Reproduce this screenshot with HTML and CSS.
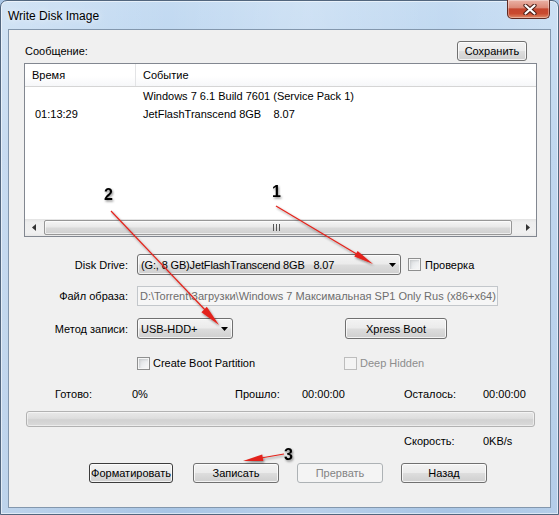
FILE: index.html
```html
<!DOCTYPE html>
<html lang="ru">
<head>
<meta charset="utf-8">
<title>Write Disk Image</title>
<link rel="stylesheet" href="styles.css">
</head>
<body>
<div class="window">
  <div class="titlebar">
    <span class="title">Write Disk Image</span>
    <div class="close">
      <svg width="14" height="11" viewBox="0 0 14 11"><path d="M2.5 1.5 L11.5 9.5 M11.5 1.5 L2.5 9.5" stroke="#4a1d16" stroke-width="4.2" stroke-linecap="round"/><path d="M2.5 1.5 L11.5 9.5 M11.5 1.5 L2.5 9.5" stroke="#fff" stroke-width="2.2" stroke-linecap="round"/></svg>
    </div>
  </div>
  <div class="client">
    <div class="msg-row">
      <span>Сообщение:</span>
      <button class="btn save">Сохранить</button>
    </div>
    <div class="list">
      <div class="list-head">
        <div class="head-time">Время</div>
        <div class="head-event">Событие</div>
      </div>
      <div class="list-body">
        <div class="row"><div class="cell-time"></div><div class="cell-event">Windows 7 6.1 Build 7601 (Service Pack 1)</div></div>
        <div class="row"><div class="cell-time">01:13:29</div><div class="cell-event">JetFlashTranscend 8GB&nbsp;&nbsp;&nbsp;&nbsp;8.07</div></div>
      </div>
      <div class="hscroll">
        <div class="sb-arrow"><svg width="4" height="7" viewBox="0 0 4 7"><polygon points="4,0 4,7 0,3.5" fill="#333"/></svg></div>
        <div class="sb-thumb"><svg width="7" height="7" viewBox="0 0 7 7"><path d="M0.5 0V7M3.5 0V7M6.5 0V7" stroke="#555" stroke-width="1"/></svg></div>
        <div class="sb-arrow"><svg width="4" height="7" viewBox="0 0 4 7"><polygon points="0,0 0,7 4,3.5" fill="#333"/></svg></div>
      </div>
    </div>

    <div class="field-row r-drive">
      <span class="flabel">Disk Drive:</span>
      <div class="combo combo-drive"><span class="combo-text">(G:, 8 GB)JetFlashTranscend 8GB&nbsp;&nbsp; 8.07</span><svg class="combo-arrow" width="7" height="4" viewBox="0 0 7 4"><polygon points="0,0 7,0 3.5,4" fill="#000"/></svg></div>
      <div class="check check-verify"><span class="cb"></span><span>Проверка</span></div>
    </div>

    <div class="field-row r-file">
      <span class="flabel">Файл образа:</span>
      <div class="textbox">D:\Torrent\Загрузки\Windows 7 Максимальная SP1 Only Rus (x86+x64)</div>
    </div>

    <div class="field-row r-method">
      <span class="flabel">Метод записи:</span>
      <div class="combo combo-method"><span class="combo-text">USB-HDD+</span><svg class="combo-arrow" width="7" height="4" viewBox="0 0 7 4"><polygon points="0,0 7,0 3.5,4" fill="#000"/></svg></div>
      <button class="btn xpress">Xpress Boot</button>
    </div>

    <div class="r-checks">
      <div class="check check-boot"><span class="cb"></span><span>Create Boot Partition</span></div>
      <div class="check disabled"><span class="cb"></span><span>Deep Hidden</span></div>
    </div>

    <div class="r-status">
      <span class="s1">Готово:</span>
      <span class="s2">0%</span>
      <span class="s3">Прошло:</span>
      <span class="s4">00:00:00</span>
      <span class="s5">Осталось:</span>
      <span>00:00:00</span>
    </div>

    <div class="progress"></div>

    <div class="r-speed">
      <span class="s5">Скорость:</span>
      <span>0KB/s</span>
    </div>

    <div class="r-buttons">
      <button class="btn act default">Форматировать</button>
      <button class="btn act">Записать</button>
      <button class="btn act off">Прервать</button>
      <button class="btn act">Назад</button>
    </div>
  </div>

  <svg class="annot" width="559" height="515" viewBox="0 0 559 515">
    <defs>
      <filter id="sh" x="-50%" y="-50%" width="200%" height="200%">
        <feDropShadow dx="1" dy="1.5" stdDeviation="1.3" flood-color="#000" flood-opacity="0.45"/>
      </filter>
    </defs>
    <g filter="url(#sh)">
      <line x1="276" y1="206" x2="360" y2="256" stroke="#e3231b" stroke-width="1.2"/>
      <polygon points="373,264 354.3,256.6 357.6,250.9" fill="#e3231b"/>
      <line x1="111" y1="211" x2="208" y2="313" stroke="#e3231b" stroke-width="1.2"/>
      <polygon points="219,325 201.4,312.2 206.8,306.8" fill="#e3231b"/>
      <line x1="284" y1="454" x2="258" y2="458.5" stroke="#e3231b" stroke-width="1.2"/>
      <polygon points="243,461 262.2,454.4 263.4,461" fill="#e3231b"/>
      <text x="272" y="197" class="num">1</text>
      <text x="104" y="200" class="num">2</text>
      <text x="284" y="460" class="num">3</text>
    </g>
  </svg>
</div>
</body>
</html>
```
FILE: styles.css
```css
html, body {
  margin: 0;
  padding: 0;
  background: #a9c6e6;
}

body {
  width: 559px;
  height: 515px;
  overflow: hidden;
  font-family: "Liberation Sans", Arial, sans-serif;
  font-size: 11px;
  color: #000;
}

.window {
  position: relative;
  width: 559px;
  height: 515px;
  box-sizing: border-box;
  border: 1px solid #52667e;
  border-radius: 7px 7px 0 0;
  background:
    linear-gradient(90deg, rgba(255,255,255,0.25) 0%, rgba(255,255,255,0) 30%, rgba(255,255,255,0.2) 55%, rgba(255,255,255,0) 80%, rgba(255,255,255,0.15) 100%),
    linear-gradient(#c4dbf2 0%, #b6d0ec 30%, #a8c5e5 100%);
  box-shadow: inset 0 0 0 1px rgba(255,255,255,0.55);
  display: flex;
  flex-direction: column;
}

.titlebar {
  height: 28px;
  display: flex;
  align-items: flex-start;
  flex-shrink: 0;
}

.title {
  margin: 8px 0 0 7px;
  font-size: 12px;
  color: #000;
  text-shadow: 0 0 6px rgba(255,255,255,0.9);
}

.close {
  margin: -1px 8px 0 auto;
  width: 43px;
  height: 19px;
  box-sizing: border-box;
  border: 1px solid #5e2a22;
  border-top: none;
  border-radius: 0 0 5px 5px;
  background: linear-gradient(#eab2a6 0%, #dc8a78 42%, #c5462f 50%, #c94a2f 75%, #de8a68 100%);
  box-shadow: inset 0 0 0 1px rgba(255,255,255,0.35);
  display: flex;
  align-items: center;
  justify-content: center;
  padding-left: 2px;
}

.client {
  margin: 0 7px;
  height: 479px;
  box-sizing: border-box;
  border: 1px solid #8397ad;
  background: #f0f0f0;
  display: flex;
  flex-direction: column;
  flex-shrink: 0;
}

/* buttons */
.btn {
  box-sizing: border-box;
  height: 20px;
  padding: 0;
  border: 1px solid #707070;
  border-radius: 3px;
  background: linear-gradient(#f3f3f3 0%, #ebebeb 48%, #dddddd 52%, #cfcfcf 100%);
  box-shadow: inset 0 0 0 1px rgba(255,255,255,0.75);
  font-family: "Liberation Sans", Arial, sans-serif;
  font-size: 11px;
  color: #000;
  text-align: center;
}

.msg-row {
  margin-top: 11px;
  height: 20px;
  padding: 0 23px 0 16px;
  display: flex;
  align-items: center;
  justify-content: space-between;
}

.save {
  width: 70px;
}

/* list */
.list {
  margin: 2px 13px 0 15px;
  height: 174px;
  box-sizing: border-box;
  border: 1px solid #828790;
  background: #fff;
  display: flex;
  flex-direction: column;
}

.list-head {
  height: 23px;
  box-sizing: border-box;
  border-bottom: 1px solid #d5d5d5;
  display: flex;
  background: linear-gradient(#fff 0%, #fff 55%, #f6f7f9 100%);
}

.head-time {
  width: 111px;
  box-sizing: border-box;
  border-right: 1px solid #e3e4e6;
  padding-left: 7px;
  display: flex;
  align-items: center;
}

.head-event {
  padding-left: 7px;
  display: flex;
  align-items: center;
}

.list-body {
  flex: 1;
}

.row {
  height: 18px;
  display: flex;
  align-items: center;
}

.cell-time {
  width: 111px;
  box-sizing: border-box;
  padding-left: 10px;
}

.cell-event {
  padding-left: 7px;
  white-space: nowrap;
}

.hscroll {
  height: 17px;
  display: flex;
  align-items: center;
  background: linear-gradient(#e3e3e3 0%, #eeeeee 20%, #f0f0f0 80%, #e8e8e8 100%);
}

.sb-arrow {
  width: 17px;
  height: 17px;
  display: flex;
  align-items: center;
  justify-content: center;
}

.sb-thumb {
  flex: 1;
  height: 15px;
  margin: 0 7px 0 2px;
  box-sizing: border-box;
  border: 1px solid #979797;
  border-radius: 2px;
  background: linear-gradient(#f5f5f5 0%, #e9e9e9 45%, #d9d9d9 55%, #d0d0d0 100%);
  box-shadow: inset 0 0 0 1px rgba(255,255,255,0.6);
  display: flex;
  align-items: center;
  justify-content: center;
  padding-right: 4px;
}

/* form rows */
.field-row {
  height: 21px;
  display: flex;
  align-items: center;
}

.r-drive { margin-top: 17px; }
.r-file { margin-top: 11px; height: 20px; }
.r-method { margin-top: 12px; }

.flabel {
  width: 119px;
  margin-right: 9px;
  text-align: right;
  flex-shrink: 0;
}

.combo {
  height: 21px;
  box-sizing: border-box;
  border: 1px solid #707070;
  border-radius: 3px;
  background: linear-gradient(#f3f3f3 0%, #ebebeb 48%, #dddddd 52%, #cfcfcf 100%);
  box-shadow: inset 0 0 0 1px rgba(255,255,255,0.75);
  display: flex;
  align-items: center;
  padding: 0 4px 0 3px;
}

.combo-text {
  white-space: nowrap;
}

.combo-arrow {
  margin-left: auto;
}

.combo-drive { width: 264px; letter-spacing: -0.15px; }
.combo-method { width: 96px; padding-right: 4px; }

.check {
  display: flex;
  align-items: center;
  gap: 3px;
}

.check-verify {
  margin-left: 7px;
  gap: 4px;
}

.cb {
  width: 13px;
  height: 13px;
  box-sizing: border-box;
  border: 1px solid #8e8f8f;
  background: linear-gradient(135deg, #d4d6d9 0%, #eceef0 55%, #fafafa 100%);
  box-shadow: inset 0 0 0 1px #f6f6f6, inset 1px 1px 2px 1px rgba(160,165,170,0.35);
  flex-shrink: 0;
}

.check.disabled {
  color: #8d8d8d;
}

.check.disabled .cb {
  border-color: #bdbdbd;
  background: #f4f4f4;
  box-shadow: none;
}

.textbox {
  width: 361px;
  height: 20px;
  box-sizing: border-box;
  border: 1px solid #c3c7cb;
  background: #f6f6f6;
  color: #6d6d6d;
  padding-left: 2px;
  line-height: 18px;
  white-space: nowrap;
  overflow: hidden;
}

.xpress {
  width: 102px;
  height: 21px;
  margin-left: 112px;
}

.r-checks {
  margin-top: 16px;
  height: 16px;
  padding-left: 128px;
  display: flex;
  align-items: center;
}

.check-boot {
  width: 207px;
}

.r-status {
  margin-top: 16px;
  height: 14px;
  line-height: 14px;
  padding-left: 46px;
  display: flex;
}

.s1 { width: 77px; }
.s2 { width: 103px; }
.s3 { width: 67px; }
.s4 { width: 102px; }
.s5 { width: 79px; }

.progress {
  margin: 10px 0 0 17px;
  width: 509px;
  height: 16px;
  box-sizing: border-box;
  border: 1px solid #b2b2b2;
  border-radius: 3px;
  background: linear-gradient(#e9e9e9 0%, #dedede 45%, #d2d2d2 55%, #dadada 100%);
  box-shadow: inset 0 0 0 1px rgba(255,255,255,0.5);
}

.r-speed {
  margin-top: 7px;
  height: 14px;
  line-height: 14px;
  padding-left: 395px;
  display: flex;
}

.r-buttons {
  margin-top: 15px;
  padding-left: 80px;
  display: flex;
  gap: 18px;
}

.act {
  width: 86px;
}

.act.default {
  border-color: #3c3c3c;
  width: 84px;
  margin-right: 2px;
}

.act.off {
  border-color: #adb2b5;
  background: #f4f4f4;
  box-shadow: none;
  color: #838383;
}

/* annotation overlay */
.annot {
  position: absolute;
  top: -1px;
  left: -1px;
  pointer-events: none;
}

.num {
  font-family: "Liberation Sans", Arial, sans-serif;
  font-weight: bold;
  font-size: 16px;
  fill: #000;
}
```
